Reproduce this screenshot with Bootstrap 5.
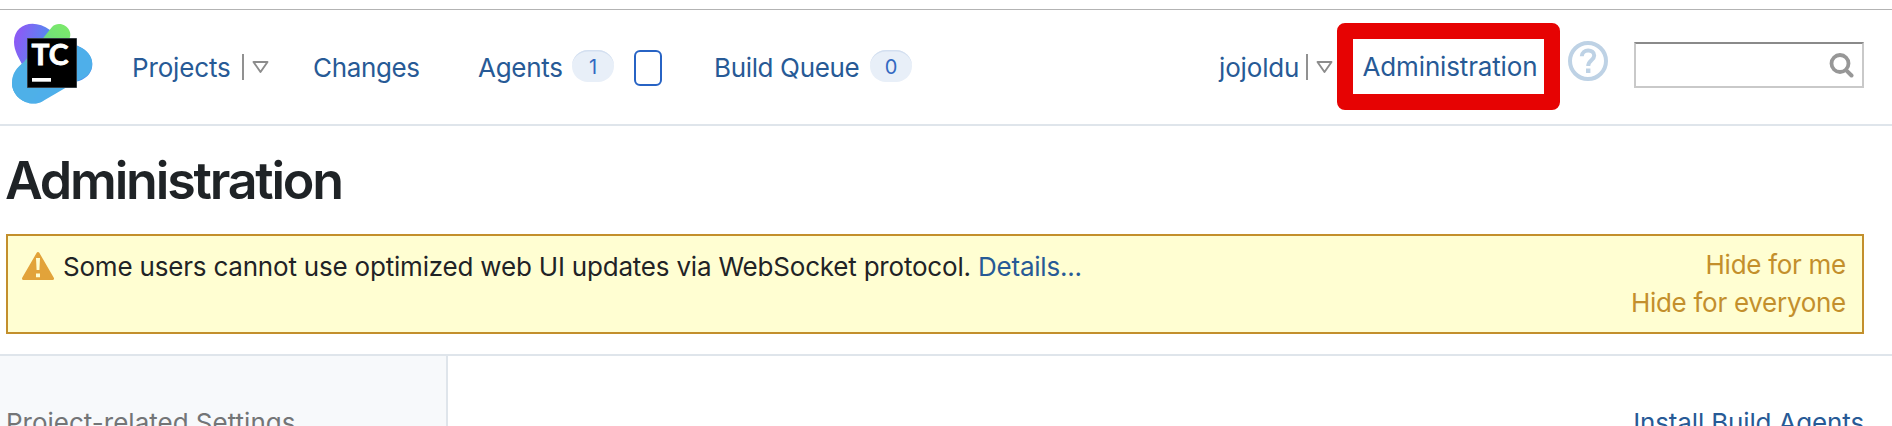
<!DOCTYPE html>
<html lang="en">
<head>
<meta charset="utf-8">
<meta name="viewport" content="width=device-width, initial-scale=1">
<title>Administration — TeamCity</title>
<link href="https://cdn.jsdelivr.net/npm/bootstrap@5.3.0/dist/css/bootstrap.min.css" rel="stylesheet">
<style>
  body { font-family: Inter, "Liberation Sans", sans-serif; font-size: 26px; line-height: 38px; color: #1f2326; background: #fff; height: 426px; overflow: hidden; }
  a { color: #275a96; text-decoration: none; }
  .topline { height: 10px; border-bottom: 1px solid #b3b3b3; }
  .tc-header { height: 116px; border-bottom: 2px solid #dfe5eb; }
  .tc-header > *, .tc-nav > * { flex: none; }
  .tc-nav { height: 114px; }
  .tc-nav a { white-space: nowrap; padding-top: 1px; }
  .w-projects { width: 110px; letter-spacing: -.15px; }
  .w-changes { width: 165px; letter-spacing: -.35px; }
  .w-agents { width: 94px; letter-spacing: -.3px; }
  .w-queue { width: 156px; letter-spacing: -.35px; }
  .w-user { width: 87px; letter-spacing: -.15px; }
  .sep { width: 2px; height: 26px; background: #919191; margin-right: 8px; }
  .counter { width: 42px; height: 32px; margin-top: -2px; border-radius: 16px; background: #e8eff8; box-shadow: inset 0 2px 0 -.5px #d3dff0; color: #3369c1; font-size: 20px; line-height: 34px; text-align: center; }
  .agent-box { width: 28px; height: 36px; margin: 2px 52px 0 20px; border: 2px solid #2763c4; border-radius: 6px; }
  .marked { width: 223px; height: 87px; margin: -1px 8px 0 5px; border: 16px solid #e60303; border-radius: 8px; }
  .marked a { letter-spacing: -.15px; padding: 1px 0 0 3px; }
  .search-box { width: 230px; height: 46px; margin: -4px 28px 0 26px; border: 2px solid #c9c9c9; border-top-color: #8a8a8a; }
  .page-title { height: 108px; padding: 24px 0 0 5px; font-size: 52px; line-height: 62px; font-weight: 600; letter-spacing: -2.2px; }
  .notice { height: 100px; margin: 0 28px 20px 6px; border: 2px solid #c38f2c; background: #fffed2; }
  .notice .msg { letter-spacing: -.2px; padding-top: 12px; white-space: nowrap; }
  .notice .hide-links { padding: 10px 16px 0 0; letter-spacing: -.28px; }
  .hide-links a { color: #c38f2c; }
  .content { border-top: 2px solid #dfe5eb; height: 72px; }
  .side { width: 448px; border-right: 2px solid #dfe5eb; background: #f7f9fb; color: #737577; padding: 48px 0 0 6px; }
  .main-area { padding: 48px 28px 0 0; letter-spacing: -.15px; }
</style>
</head>
<body>
<div class="topline"></div>
<header class="tc-header d-flex align-items-center">
  <svg width="132" height="114" viewBox="0 0 132 114" role="img" aria-label="TeamCity">
    <defs>
      <linearGradient id="violet" gradientUnits="userSpaceOnUse" x1="14" y1="30" x2="62" y2="44"><stop offset=".05" stop-color="#8a5cf5"/><stop offset=".75" stop-color="#4c91ef"/></linearGradient>
      <linearGradient id="green" gradientUnits="userSpaceOnUse" x1="64" y1="18" x2="24" y2="70"><stop offset="0" stop-color="#7ae86c"/><stop offset=".2" stop-color="#74e276"/><stop offset=".9" stop-color="#4db2e3"/></linearGradient>
    </defs>
    <path d="M14 32C14 14 34 8 50 20L78 36C97 44 97 65 79 71L60 75L24 58C19 48 14 41 14 32Z" fill="url(#violet)"/>
    <path d="M77 36C97 42 97 65 79 70L43 91C29 99 12 87 12 73L55 60Z" fill="#4eafea"/>
    <path d="M52 17C60 9 75 19 69 30L50 66L31 92C21 93 12 84 12 73C12 64 17 57 24 52Z" fill="url(#green)"/>
    <path d="M12 73C12 63 17 57 25 52L50 72L43 91C29 99 12 87 12 73Z" fill="#4eafea" fill-opacity=".7"/>
    <path d="M27.5 28.5h49v49h-49z" fill="#000" stroke="#333a40"/>
    <text x="31.5" y="55" font-family="Lato, sans-serif" font-weight="700" font-size="29" fill="#fff" stroke="#fff" stroke-width=".8" textLength="37" lengthAdjust="spacingAndGlyphs">TC</text>
    <path d="M32 68h19v3.7H32z" fill="#fff"/>
  </svg>
  <nav class="tc-nav d-flex align-items-center">
    <a href="#" class="w-projects">Projects</a>
    <span class="sep"></span>
    <svg width="61" height="14" viewBox="0 0 61 14"><path d="M1.5 2h14L8.5 12z" fill="#fff" stroke="#8c8c8c" stroke-width="1.9" stroke-linejoin="round"/></svg>
    <a href="#" class="w-changes">Changes</a>
    <a href="#" class="w-agents">Agents</a>
    <span class="counter">1</span>
    <span class="agent-box"></span>
    <a href="#" class="w-queue">Build Queue</a>
    <span class="counter">0</span>
  </nav>
  <div class="tc-nav d-flex align-items-center ms-auto">
    <a href="#" class="w-user">jojoldu</a>
    <span class="sep"></span>
    <svg width="16" height="14" viewBox="0 0 16 14" overflow="visible"><path d="M1.5 2h14L8.5 12z" fill="#fff" stroke="#8c8c8c" stroke-width="1.9" stroke-linejoin="round"/></svg>
    <div class="marked d-flex align-items-center justify-content-center"><a href="#">Administration</a></div>
    <svg class="mb-2" width="40" height="44" viewBox="0 0 40 44" aria-label="Help"><circle cx="20" cy="20" r="18" fill="none" stroke="#bed2e5" stroke-width="4"/><path d="M13.8 15.3C14 7.8 26.2 7.8 26.2 14.5C26.2 19.3 20.2 19.2 20.2 25" fill="none" stroke="#bed2e5" stroke-width="4"/><path d="M18 27.5h4.4v4.5H18z" fill="#bed2e5"/></svg>
    <div class="search-box d-flex align-items-center justify-content-end">
      <svg width="33" height="26" viewBox="0 0 33 26" aria-label="Search"><circle cx="11" cy="11.5" r="8.5" fill="none" stroke="#979797" stroke-width="3.8"/><path d="M17.3 18.3l5.2 5.2" stroke="#979797" stroke-width="4" stroke-linecap="round"/></svg>
    </div>
  </div>
</header>
<h1 class="page-title m-0">Administration</h1>
<div class="notice d-flex justify-content-between">
  <div class="d-flex">
    <svg width="55" height="50" viewBox="0 0 55 50" aria-hidden="true"><path d="M30 17.5L44.5 42.5h-29z" fill="#e2a33a" stroke="#e2a33a" stroke-width="3" stroke-linejoin="round"/><path d="M28 22h4l-.6 12h-2.8zM28 37.5h4v3.7h-4z" fill="#fffed2"/></svg>
    <div class="msg"><span class="msg-text">Some users cannot use optimized web UI updates via WebSocket protocol.</span> <a href="#">Details...</a></div>
  </div>
  <div class="hide-links d-flex flex-column align-items-end">
    <a href="#">Hide for me</a>
    <a href="#">Hide for everyone</a>
  </div>
</div>
<div class="content d-flex justify-content-between">
  <aside class="side">Project-related Settings</aside>
  <div class="main-area"><a href="#">Install Build Agents</a></div>
</div>
<script src="https://cdn.jsdelivr.net/npm/bootstrap@5.3.0/dist/js/bootstrap.bundle.min.js"></script>
</body>
</html>
